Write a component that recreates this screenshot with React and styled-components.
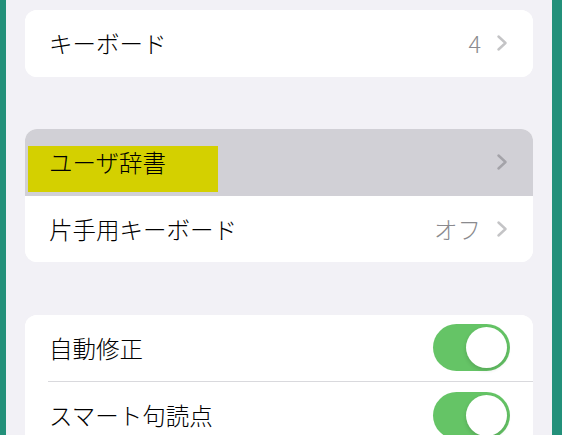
import React from "react";
import styled, { createGlobalStyle } from "styled-components";

const GlobalStyle = createGlobalStyle`
  * {
    box-sizing: border-box;
    margin: 0;
    padding: 0;
  }
  body {
    background: #f2f1f6;
    font-family: "Noto Sans CJK JP", "Noto Sans", sans-serif;
  }
`;

const Frame = styled.div`
  display: flex;
  height: 435px;
  overflow: hidden;
`;

const Edge = styled.div`
  width: ${(p) => p.w}px;
  background: #23907a;
  flex-shrink: 0;
`;

const Content = styled.div`
  flex: 1;
  display: flex;
  flex-direction: column;
  gap: 52.5px;
  padding: 10px 19px 0;
  background: #f2f1f6;
`;

const Card = styled.div`
  background: #fff;
  border-radius: 12px;
  overflow: hidden;
  flex-shrink: 0;
`;

const Row = styled.div`
  position: relative;
  display: flex;
  align-items: center;
  height: 66.5px;
  padding: 0 23px 0 24px;
  background: ${(p) => (p.pressed ? "#d1d0d6" : "#fff")};
`;

const Separator = styled.div`
  height: 1px;
  margin-left: 23px;
  background: #d9d9dd;
`;

const Label = styled.span`
  position: relative;
  flex: 1;
  font-size: 23.5px;
  font-weight: 300;
  color: #000;
  white-space: nowrap;
`;

const Value = styled.span`
  font-size: 23.5px;
  font-weight: 300;
  color: #8a8a8e;
  margin-right: 16px;
`;

const Marker = styled.div`
  position: absolute;
  left: 3px;
  top: 17px;
  width: 190px;
  height: 46px;
  background: #d4d000;
`;

const Toggle = styled.div`
  width: 77px;
  height: 47px;
  border-radius: 24px;
  background: #65c466;
  padding: 3px;
  display: flex;
  justify-content: flex-end;
`;

const Knob = styled.div`
  width: 41px;
  height: 41px;
  border-radius: 50%;
  background: #fff;
  box-shadow: 0 2px 4px rgba(0, 0, 0, 0.15);
`;

const Chevron = () => (
  <svg width="11" height="16" viewBox="0 0 11 16" style={{ marginRight: 2 }}>
    <polyline
      points="1.5,1.5 8.5,8 1.5,14.5"
      fill="none"
      stroke="rgba(60, 60, 67, 0.3)"
      strokeWidth="2.4"
      strokeLinecap="round"
      strokeLinejoin="round"
    />
  </svg>
);

const LinkRow = ({ label, value, pressed, marked }) => (
  <Row pressed={pressed}>
    {marked && <Marker />}
    <Label>{label}</Label>
    {value && <Value>{value}</Value>}
    <Chevron />
  </Row>
);

const SwitchRow = ({ label }) => (
  <Row>
    <Label>{label}</Label>
    <Toggle>
      <Knob />
    </Toggle>
  </Row>
);

export default function App() {
  return (
    <Frame>
      <GlobalStyle />
      <Edge w={6} />
      <Content>
        <Card>
          <LinkRow label="キーボード" value="4" />
        </Card>
        <Card>
          <LinkRow label="ユーザ辞書" pressed marked />
          <LinkRow label="片手用キーボード" value="オフ" />
        </Card>
        <Card>
          <SwitchRow label="自動修正" />
          <Separator />
          <SwitchRow label="スマート句読点" />
        </Card>
      </Content>
      <Edge w={10} />
    </Frame>
  );
}
